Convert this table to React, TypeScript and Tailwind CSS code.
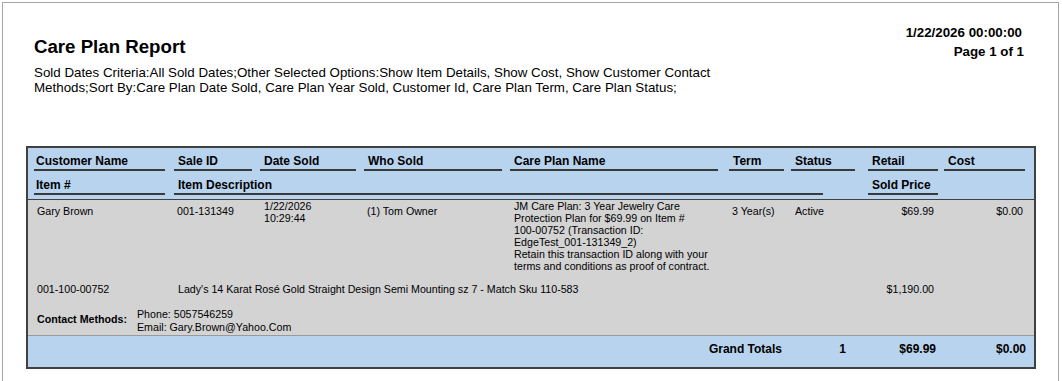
const cols = "grid grid-cols-[140px_86px_104px_146px_219px_62px_77px_76px_81px]"

const HeadCell = ({ label, line, className = "", pad = "pl-[4px]" }: { label: string; line: string; className?: string; pad?: string }) => (
  <div className={className}>
    <div className={`${pad} leading-[14px]`}>{label}</div>
    <div className={`mt-[1px] h-[2px] bg-[#3a3a3a] ${line}`} />
  </div>
)

const carePlanLines = [
  "JM Care Plan: 3 Year Jewelry Care",
  "Protection Plan for $69.99 on Item #",
  "100-00752 (Transaction ID:",
  "EdgeTest_001-131349_2)",
  "Retain this transaction ID along with your",
  "terms and conditions as proof of contract.",
]

const App = () => {
  return (
    <div className="w-[1062px] h-[381px] overflow-hidden bg-white p-[2px] text-black font-['Liberation_Sans',Arial,sans-serif]">
      <div className="w-[1057px] min-h-[420px] border border-[#a6a6a6]">
        {/* report header */}
        <div className="flex justify-between pl-[31px] pr-[36px]">
          <div className="pt-[33px]">
            <h1 className="text-[18.67px] leading-[21px] font-bold">Care Plan Report</h1>
            <p className="mt-[8px] w-[700px] text-[13.33px] leading-[15px]">
              Sold Dates Criteria:All Sold Dates;Other Selected Options:Show Item Details, Show Cost, Show Customer Contact
              Methods;Sort By:Care Plan Date Sold, Care Plan Year Sold, Customer Id, Care Plan Term, Care Plan Status;
            </p>
          </div>
          <div className="pt-[22px] text-right text-[13.33px] leading-[16px] font-bold">
            <div>1/22/2026 00:00:00</div>
            <div className="mt-[3px] mr-[-2px]">Page 1 of 1</div>
          </div>
        </div>

        {/* table */}
        <div className="mt-[51px] ml-[23px] w-[1010px] border-2 border-[#404040]">
          <div className="bg-[#b8d3ee] pl-[6px] pr-[7px] text-[12px] font-bold border-b border-[#404040]">
            <div className={`${cols} pt-[6px]`}>
              <HeadCell label="Customer Name" line="w-[131px]" pad="pl-[2px]" />
              <HeadCell label="Sale ID" line="w-[78px]" />
              <HeadCell label="Date Sold" line="w-[96px]" />
              <HeadCell label="Who Sold" line="w-[138px]" />
              <HeadCell label="Care Plan Name" line="w-[208px]" />
              <HeadCell label="Term" line="w-[55px]" />
              <HeadCell label="Status" line="w-[64px]" />
              <HeadCell label="Retail" line="w-[70px]" />
              <HeadCell label="Cost" line="w-[81px]" />
            </div>
            <div className={`${cols} pt-[7px] pb-[4px]`}>
              <HeadCell label="Item #" line="w-[131px]" pad="pl-[2px]" />
              <HeadCell label="Item Description" line="w-[649px]" className="col-span-6" />
              <HeadCell label="Sold Price" line="w-[70px]" />
            </div>
          </div>

          <div className="bg-[#d3d3d3] pl-[6px] pr-[7px] text-[10.67px] leading-[12px] border-b border-[#9a9a9a]">
            <div className={`${cols} pb-[5px]`}>
              <div className="pl-[3px] pt-[5px]">Gary Brown</div>
              <div className="pl-[3px] pt-[5px]">001-131349</div>
              <div className="pl-[4px]">
                <div>1/22/2026</div>
                <div>10:29:44</div>
              </div>
              <div className="pl-[3px] pt-[5px]">(1) Tom Owner</div>
              <div className="pl-[4px] whitespace-nowrap">
                {carePlanLines.map((l) => (
                  <div key={l}>{l}</div>
                ))}
              </div>
              <div className="pl-[3px] pt-[5px]">3 Year(s)</div>
              <div className="pl-[4px] pt-[5px]">Active</div>
              <div className="pr-[10px] pt-[5px] text-right">$69.99</div>
              <div className="pr-[2px] pt-[5px] text-right">$0.00</div>
            </div>
            <div className={`${cols} pt-[6px]`}>
              <div className="pl-[3px]">001-100-00752</div>
              <div className="col-span-6 pl-[4px] whitespace-nowrap">
                Lady's 14 Karat Rosé Gold Straight Design Semi Mounting sz 7 - Match Sku 110-583
              </div>
              <div className="pr-[10px] text-right">$1,190.00</div>
              <div />
            </div>
            <div className="flex pt-[13px] pb-[1px]">
              <div className="w-[103px] pl-[3px] pt-[5px] font-bold">Contact Methods:</div>
              <div className="leading-[13px]">
                <div>Phone: 5057546259</div>
                <div>Email: Gary.Brown@Yahoo.Com</div>
              </div>
            </div>
          </div>

          <div className={`${cols} bg-[#b8d3ee] pl-[6px] pr-[7px] h-[31px] pt-[6px] leading-[14px] text-[12px] font-bold`}>
            <div className="col-span-6 pr-[9px] text-right">Grand Totals</div>
            <div className="pr-[22px] text-right">1</div>
            <div className="pr-[8px] text-right">$69.99</div>
            <div className="mr-[-1px] text-right">$0.00</div>
          </div>
        </div>
      </div>
    </div>
  )
}

export default App
